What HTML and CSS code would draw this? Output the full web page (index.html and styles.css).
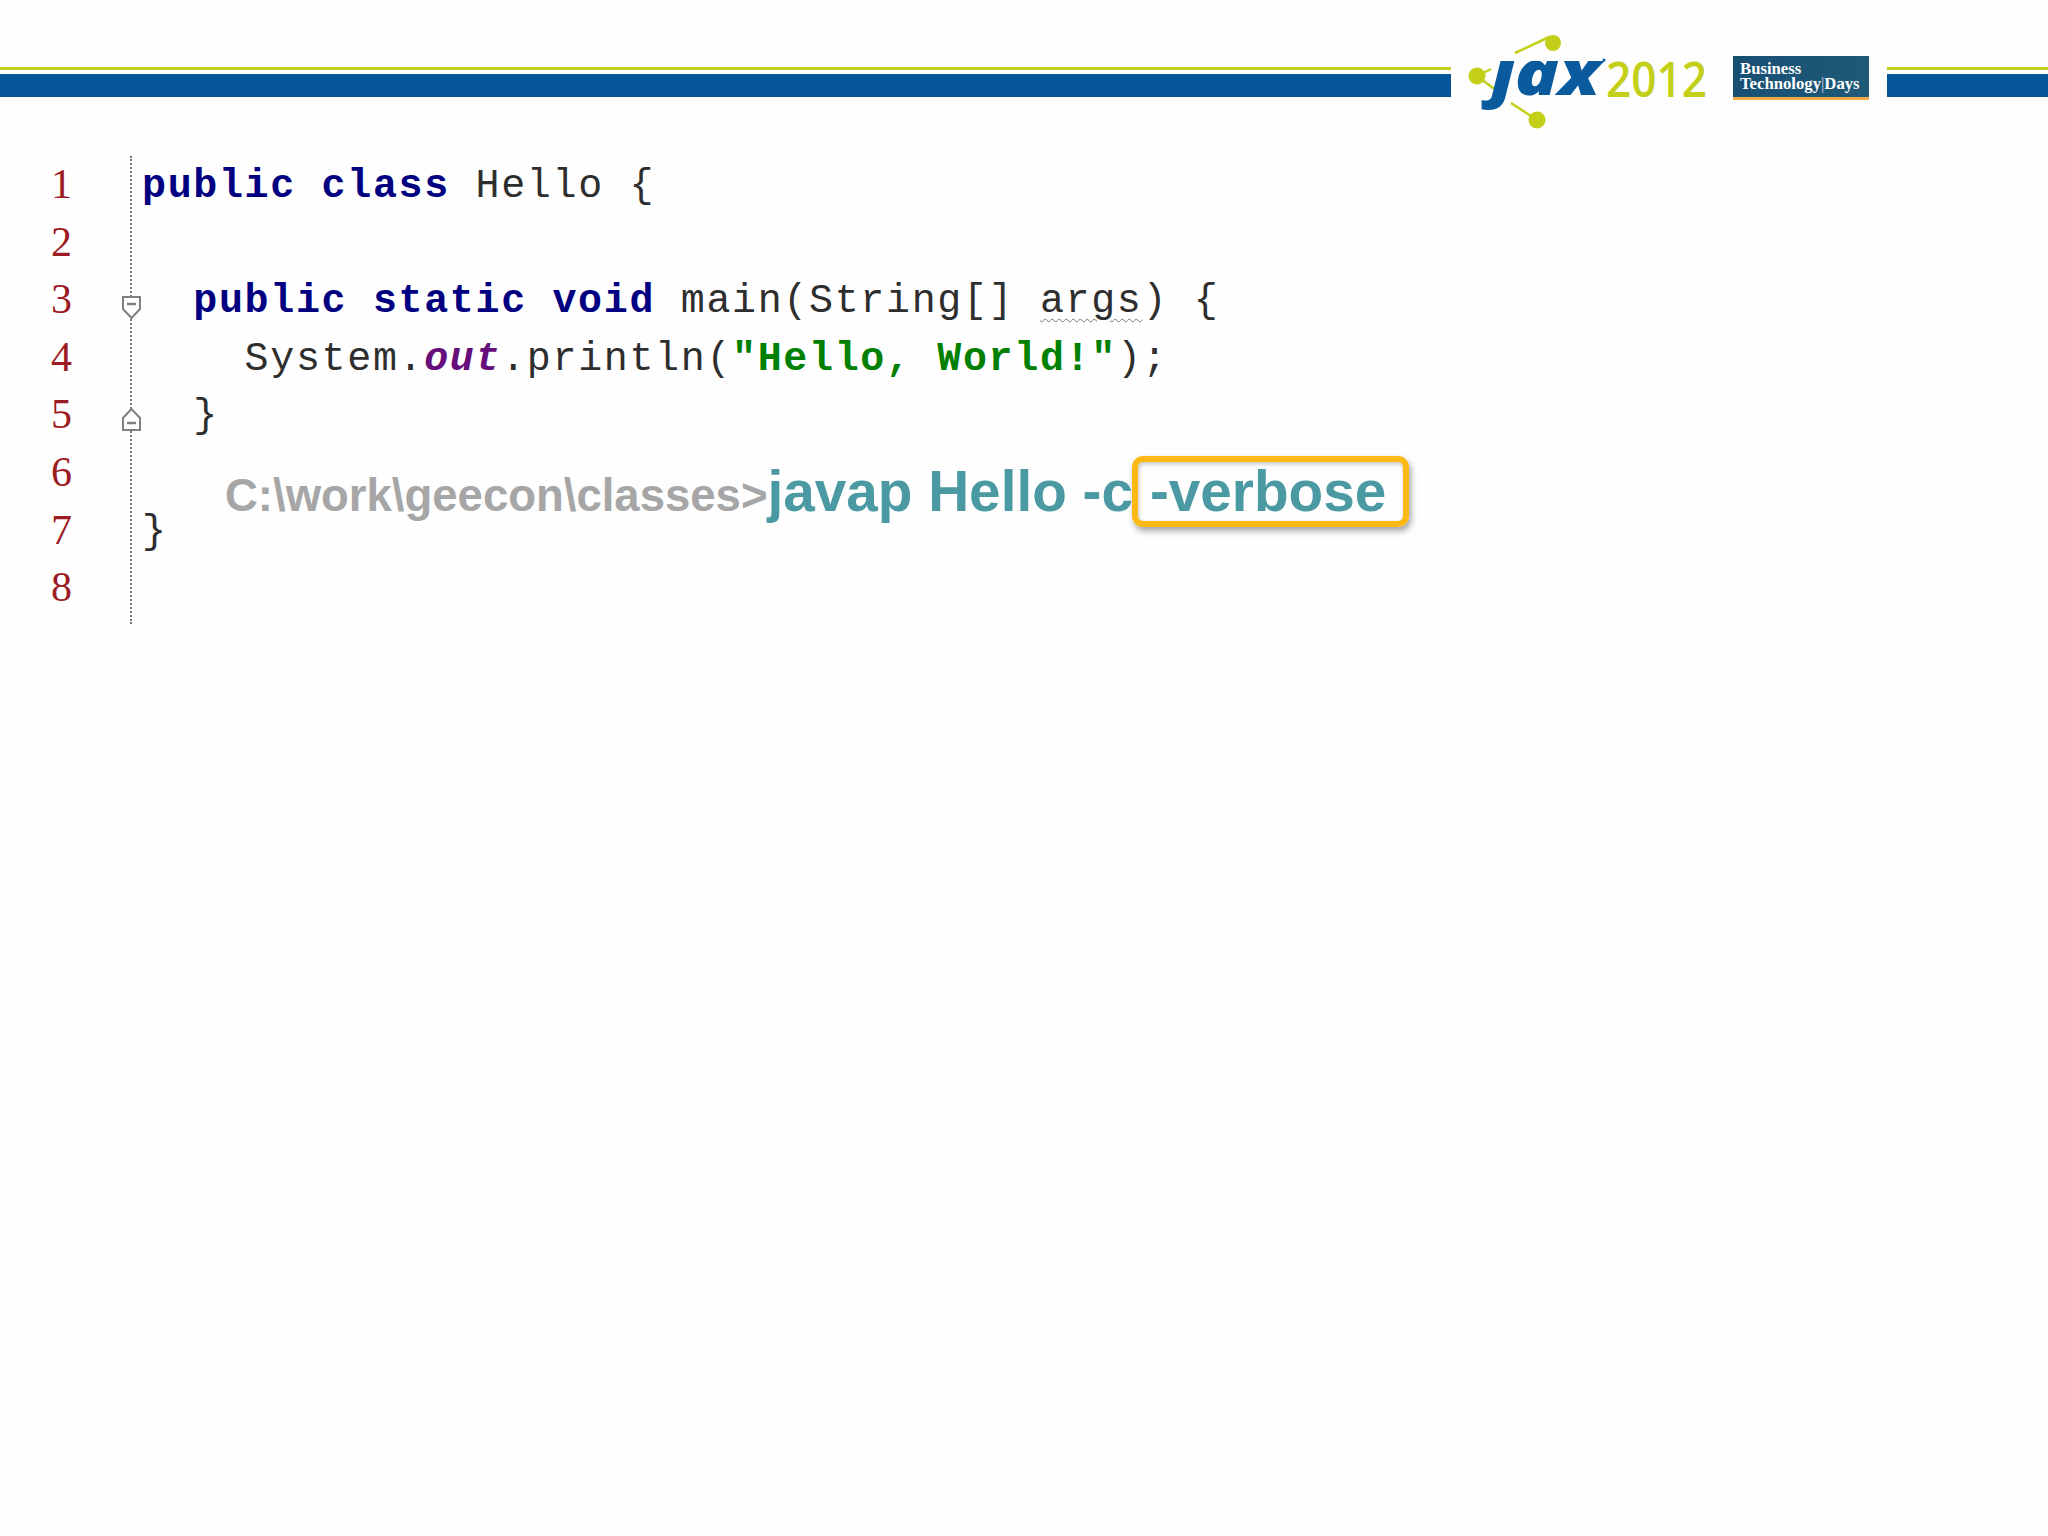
FILE: index.html
```html
<!DOCTYPE html>
<html lang="en">
<head>
<meta charset="utf-8">
<title>javap Hello -c -verbose</title>
<link rel="stylesheet" href="styles.css">
</head>
<body>
<header class="header">
  <div class="rule rule-left"></div>
  <svg class="logo" width="282" height="156" viewBox="0 0 282 156" aria-label="jax 2012">
    <defs>
      <clipPath id="jax-clip"><rect x="30" y="61" width="130" height="70"/></clipPath>
    </defs>
    <g class="logo-links">
      <line x1="64" y1="53" x2="98" y2="37"/>
      <line x1="26" y1="76" x2="40" y2="69"/>
      <line x1="26" y1="76" x2="46" y2="91"/>
      <line x1="60" y1="103" x2="86" y2="120"/>
    </g>
    <circle class="logo-dot" cx="102" cy="43" r="8"/>
    <circle class="logo-dot" cx="26" cy="76" r="8.5"/>
    <circle class="logo-dot" cx="86" cy="120" r="8.5"/>
    <g clip-path="url(#jax-clip)">
      <text class="logo-jax" x="40" y="95" textLength="109" lengthAdjust="spacingAndGlyphs">jax</text>
    </g>
    <circle class="logo-reg" cx="153" cy="60" r="1.500"/>
    <text class="logo-year" x="155" y="97" textLength="101" lengthAdjust="spacingAndGlyphs">2012</text>
  </svg>
  <div class="badge">Business<br>Technology<span class="badge-sep">|</span>Days</div>
  <div class="rule rule-right"></div>
</header>

<main class="editor">
  <div class="numbers">
    <div>1</div><div>2</div><div>3</div><div>4</div><div>5</div><div>6</div><div>7</div><div>8</div>
  </div>
  <div class="gutter">
    <svg class="fold fold-open" width="21" height="26" viewBox="0 0 21 26">
      <path d="M2 2H19V14L10.500 23L2 14Z"/><path class="fold-minus" d="M6 9H15"/>
    </svg>
    <svg class="fold fold-close" width="21" height="26" viewBox="0 0 21 26">
      <path d="M2 24H19V12L10.500 3L2 12Z"/><path class="fold-minus" d="M6 17H15"/>
    </svg>
  </div>
  <pre class="code"><span class="kw">public class</span> Hello {

  <span class="kw">public static void</span> main(String[] <span class="unused">args</span>) {
    System.<span class="field">out</span>.println(<span class="str">"Hello, World!"</span>);
  }

}
</pre>
  <div class="command"><span class="prompt">C:\work\geecon\classes&gt;</span><span class="cmd">javap Hello -c</span><span class="cmd flag">-verbose</span></div>
</main>
</body>
</html>
```
FILE: styles.css
```css
html, body {
  margin: 0;
  background: #fefefe;
}
body {
  min-height: 1536px;
  font-family: "Liberation Sans", Arial, sans-serif;
}
.header {
  display: flex;
  align-items: flex-start;
  height: 156px;
}
.rule {
  margin-top: 67px;
  height: 27px;
  border-top: 3px solid #c4cf1a;
  background: linear-gradient(#fefefe 4px, #04559a 4px);
}
.rule-left { width: 1451px; }
.rule-right { flex: 1; margin-left: 18px; }
.logo { flex: none; display: block; }
.logo-links line {
  stroke: #c4cf1a;
  stroke-width: 2.500;
}
.logo-dot { fill: #c4cf1a; }
.logo-reg { fill: #0a5a9e; }
.logo-jax {
  font-family: "Open Sans", sans-serif;
  font-weight: 800;
  font-style: italic;
  font-size: 62px;
  fill: #0a5a9e;
}
.logo-year {
  font-family: "Open Sans", sans-serif;
  font-size: 48px;
  font-weight: 600;
  fill: #c4cf1a;
}
.badge {
  flex: none;
  box-sizing: border-box;
  width: 136px;
  height: 44px;
  margin-top: 56px;
  padding: 5px 0 0 7px;
  background: linear-gradient(90deg, #174f73, #1f5a78);
  border-bottom: 3px solid #f5a94a;
  color: #fff;
  font-family: "Liberation Serif", serif;
  font-weight: bold;
  font-size: 16.700px;
  line-height: 15px;
  white-space: nowrap;
}
.badge-sep { font-weight: normal; opacity: .7; }
.editor {
  position: relative;
  display: flex;
  align-items: flex-start;
}
.numbers {
  width: 79px;
  margin-left: 51px;
  font-family: "Liberation Serif", serif;
  font-size: 42px;
  line-height: 57.600px;
  color: #9c1c24;
}
.gutter {
  position: relative;
  width: 0;
  height: 468px;
  border-left: 2px dotted #777;
}
.fold {
  position: absolute;
  left: -11px;
  fill: #fefefe;
  stroke: #808080;
  stroke-width: 2;
}
.fold-open { top: 139px; }
.fold-close { top: 250px; }
.fold-minus { stroke-width: 2.500; }
.code {
  margin: 0;
  padding: 2px 0 0 10px;
  font-family: "Liberation Mono", monospace;
  font-size: 40px;
  letter-spacing: 1.650px;
  line-height: 57.600px;
  color: #2e2e2e;
}
.kw { color: #000080; font-weight: bold; }
.str { color: #008000; font-weight: bold; }
.field { color: #660e7a; font-weight: bold; font-style: italic; }
.unused { text-decoration: underline wavy #777 1px; text-underline-offset: 6px; }
.command {
  position: absolute;
  left: 225px;
  top: 300px;
  display: flex;
  align-items: baseline;
  font-weight: bold;
  white-space: nowrap;
}
.prompt { font-size: 45.500px; color: #a6a6a6; }
.cmd { font-size: 56.700px; color: #4a99a3; }
.flag {
  box-sizing: border-box;
  margin-left: -1px;
  padding: 0 17px 0 12px;
  border: 6px solid #fbb916;
  border-radius: 11px;
  box-shadow: 2px 4px 6px rgba(90, 90, 90, .55), inset 1px 2px 4px rgba(90, 90, 90, .35);
  line-height: 59px;
}
```
